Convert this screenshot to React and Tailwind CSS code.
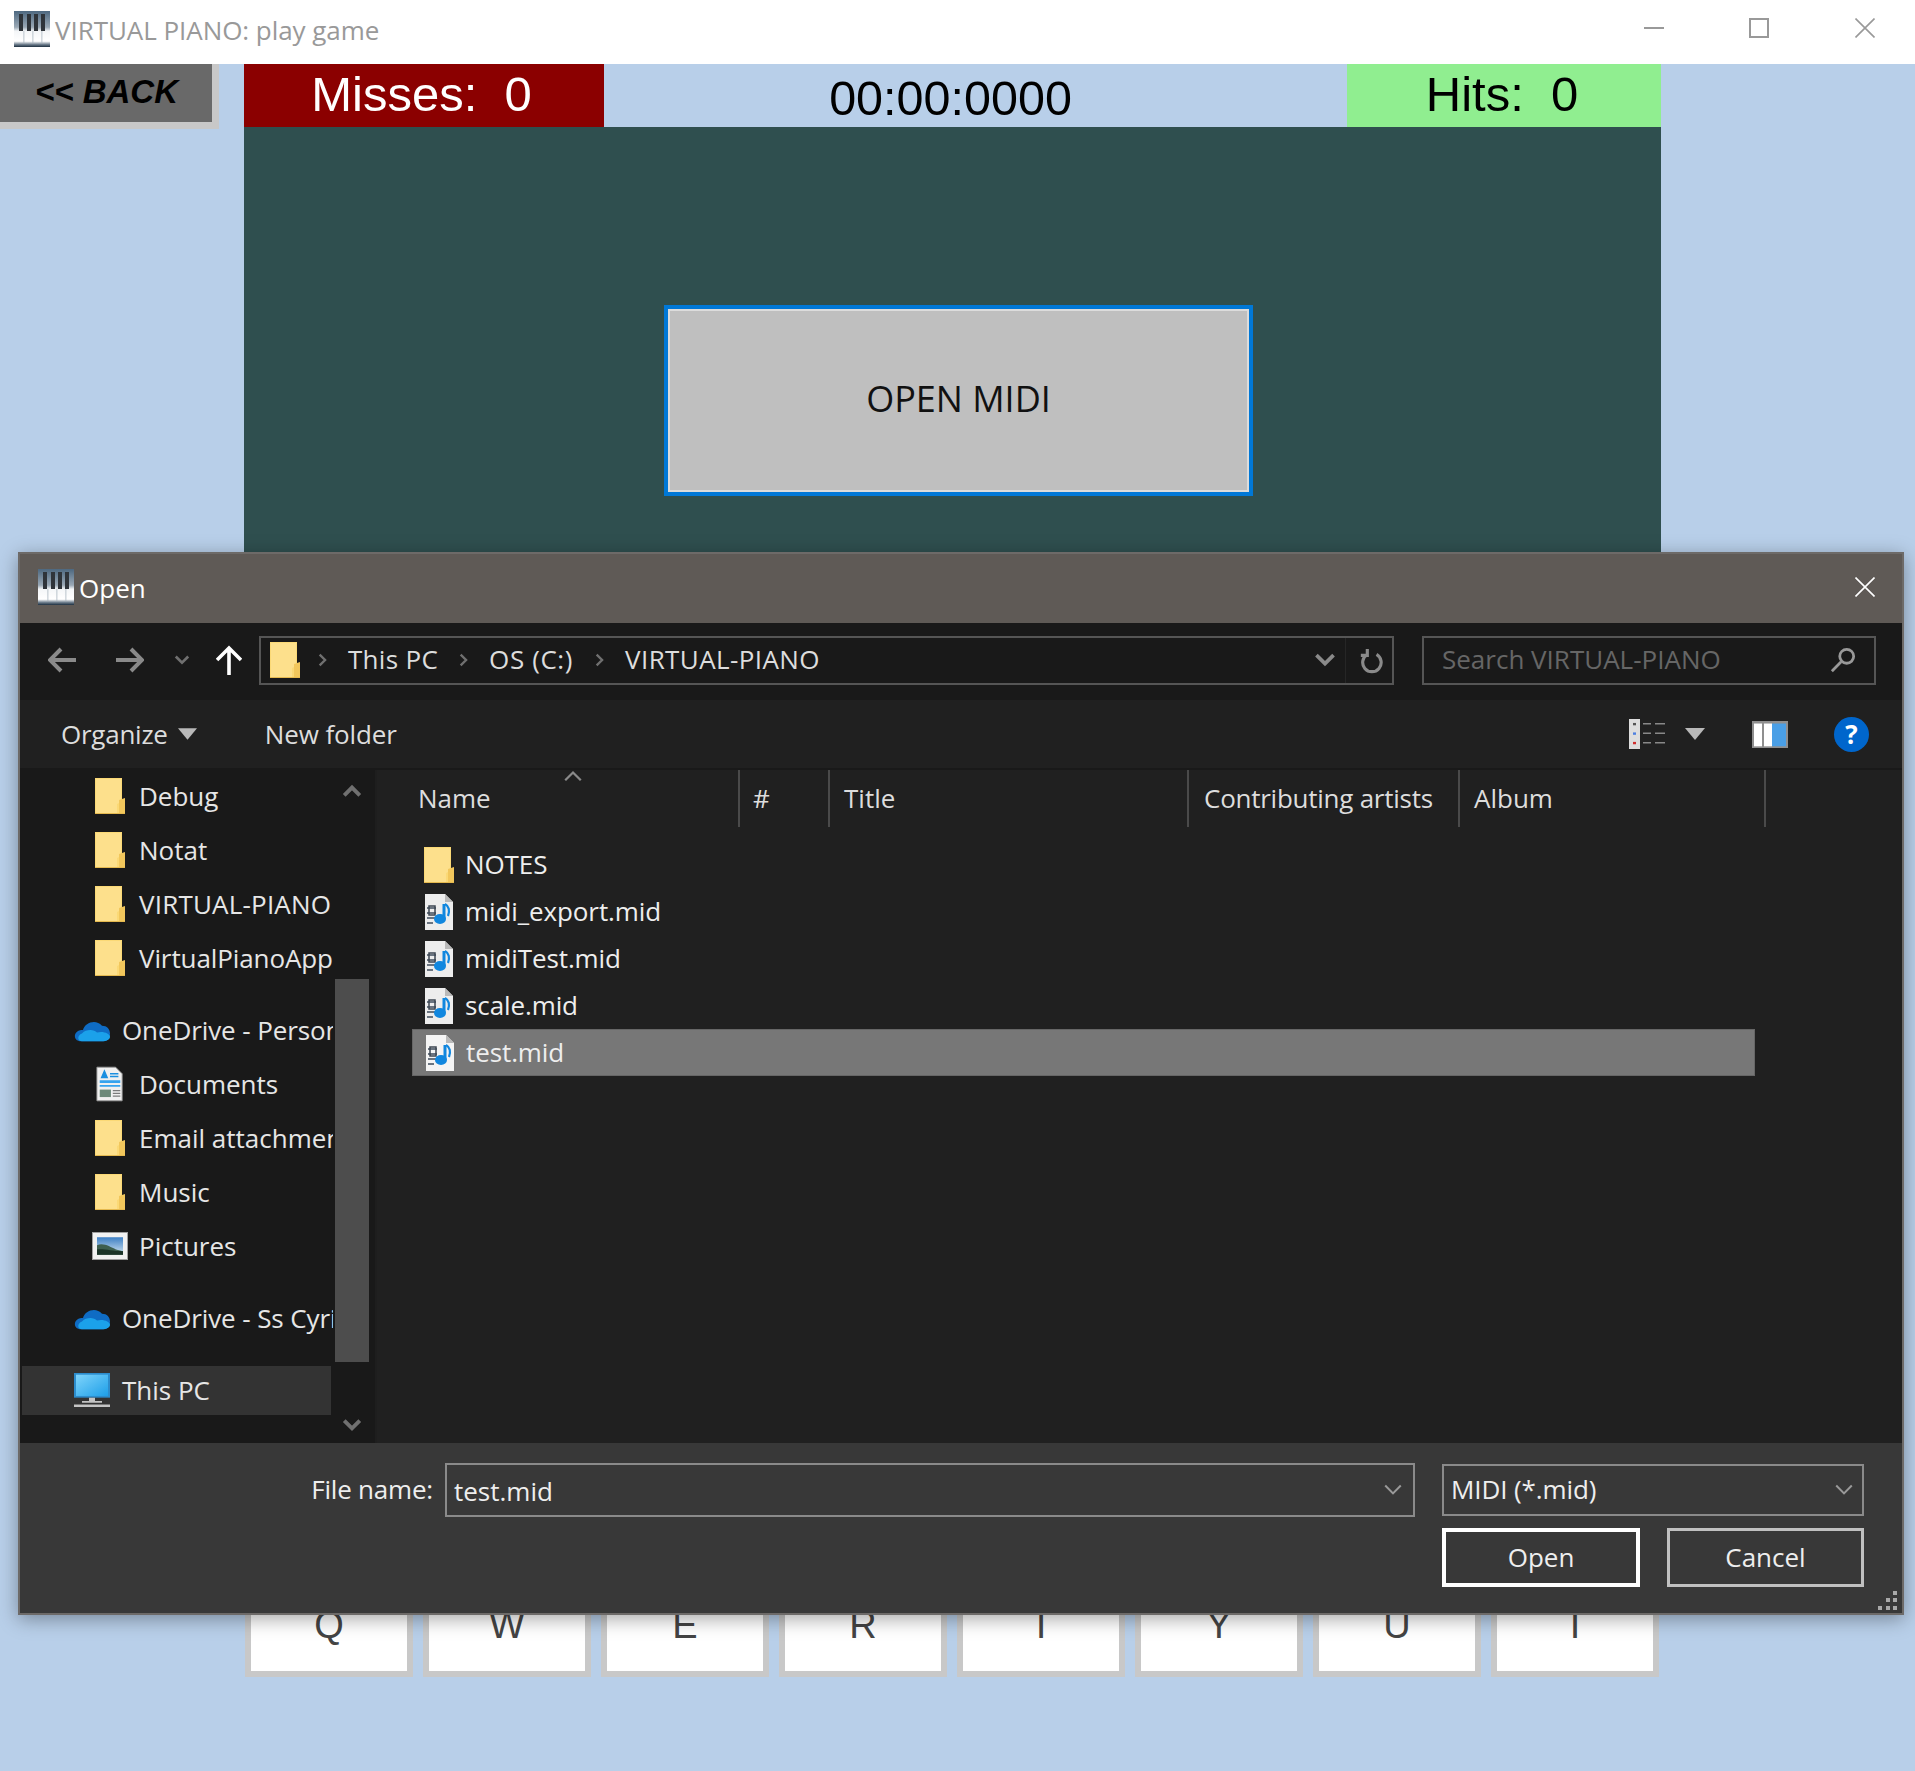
import React from "react";

const UI = { fontFamily: '"Open Sans", "Noto Sans", sans-serif' };
const ARIAL = { fontFamily: '"Liberation Sans", Arial, sans-serif' };

function Piano({ className }) {
  return (
    <svg viewBox="0 0 36 36" className={className}>
      <defs>
        <linearGradient id="pianoBg" x1="0" y1="0" x2="0" y2="1">
          <stop offset="0" stopColor="#4d6880" />
          <stop offset="0.45" stopColor="#9aa8b5" />
          <stop offset="0.56" stopColor="#f4f6f8" />
          <stop offset="0.84" stopColor="#ffffff" />
          <stop offset="0.93" stopColor="#6d7d8c" />
          <stop offset="1" stopColor="#1d2f40" />
        </linearGradient>
      </defs>
      <rect width="36" height="36" fill="url(#pianoBg)" />
      {[5, 13, 20, 27].map((x) => (
        <rect key={x} x={x} y="3" width="4" height="17" fill="#2f343a" />
      ))}
      {[9, 18, 27].map((x) => (
        <rect key={x} x={x + 0.5} y="20" width="0.8" height="12" fill="#aab5bf" />
      ))}
    </svg>
  );
}

function Folder({ className = "w-[30px] h-[36px] shrink-0" }) {
  return (
    <svg viewBox="0 0 30 36" className={className}>
      <path d="M0 0H27V36H0Z" fill="#fbd976" />
      <path d="M1 1H26V24L22 26V35H1Z" fill="#fde08c" />
      <path d="M24 22L30 20V36H24Z" fill="#f2c75c" />
      <path d="M0 35H30V36H0Z" fill="#e5b94f" />
    </svg>
  );
}

function MidiIcon({ selected }) {
  return (
    <svg viewBox="0 0 30 36" className="w-[30px] h-[36px] shrink-0">
      <path d="M1 0H21L29 8V36H1Z" fill={selected ? "#f4f4f4" : "#ededed"} />
      <path d="M21 0V8H29Z" fill="#b9b9b9" />
      <path d="M3 14H12M3 19H12M3 24H11M3 29H9" stroke="#6a7480" strokeWidth="1.8" />
      <rect x="5" y="12" width="6" height="9" fill="none" stroke="#3c4652" strokeWidth="1.5" />
      <path d="M20 10V25" stroke="#1187df" strokeWidth="3" />
      <path d="M21 10C25 12 26 17 24 22" stroke="#1187df" strokeWidth="2.2" fill="none" />
      <ellipse cx="16" cy="25" rx="6" ry="5" fill="#1187df" />
    </svg>
  );
}

function Cloud() {
  return (
    <svg viewBox="0 0 36 28" preserveAspectRatio="none" className="w-[36px] h-[24px] shrink-0">
      <path d="M6 27C1 27-1 20 3 16C5 14 7 14 9 14C11 5 22 1 28 9C33 9 36 13 36 18C36 24 33 27 29 27Z" fill="#0f6cc4" />
      <path d="M8 27C3 27 3 20 8 18C12 13 20 13 23 17C29 15 36 18 36 22C36 25 33 27 30 27Z" fill="#1ba1ea" />
    </svg>
  );
}

function Docs() {
  return (
    <svg viewBox="0 0 30 36" className="w-[28px] h-[36px] shrink-0">
      <path d="M1 0H21L28 7V36H1Z" fill="#f0f0f0" stroke="#9a9a9a" />
      <path d="M9 4L6 11H12ZM15 7H24M15 10H24" stroke="#1b8fe0" strokeWidth="1.5" fill="#1b8fe0" />
      <path d="M4 14H26V17H4Z M4 19H26V21H4Z" fill="#36a3ee" />
      <path d="M4 24H16V32H4Z" fill="#6d8a7a" />
      <path d="M18 25H26M18 28H26M18 31H26" stroke="#7a7a7a" strokeWidth="1.4" />
    </svg>
  );
}

function PicturesIcon() {
  return (
    <svg viewBox="0 0 36 32" preserveAspectRatio="none" className="w-[36px] h-[28px] shrink-0">
      <rect x="0.5" y="0.5" width="35" height="31" fill="#f1f1f1" stroke="#a0a0a0" />
      <defs>
        <linearGradient id="sky" x1="0" y1="0" x2="0" y2="1">
          <stop offset="0" stopColor="#3d7fc4" />
          <stop offset="1" stopColor="#d4e6f2" />
        </linearGradient>
      </defs>
      <rect x="5" y="6" width="26" height="20" fill="url(#sky)" />
      <path d="M5 15C12 12 18 17 24 20L31 22V26H5Z" fill="#3e5f4f" />
      <path d="M5 20C12 19 20 22 31 22V26H5Z" fill="#1b3327" />
    </svg>
  );
}

function Monitor() {
  return (
    <svg viewBox="0 0 36 40" preserveAspectRatio="none" className="w-[36px] h-[34px] shrink-0">
      <defs>
        <linearGradient id="scr" x1="0" y1="0" x2="1" y2="1">
          <stop offset="0" stopColor="#7fd4fb" />
          <stop offset="1" stopColor="#1e9fe8" />
        </linearGradient>
      </defs>
      <rect x="0" y="0" width="36" height="29" fill="#2c8ccc" />
      <rect x="2" y="2" width="32" height="25" fill="url(#scr)" />
      <path d="M15 29H21V33H28V35H8V33H15Z" fill="#c4c4c4" />
      <path d="M0 37H36V40H0Z" fill="#c4c4c4" />
    </svg>
  );
}

function Chevron({ dir = "down", className, color = "#8c8c8c", w = 2.5 }) {
  const paths = {
    down: "M2 5L9 12L16 5",
    up: "M2 12L9 5L16 12",
    right: "M6 2L13 9L6 16",
  };
  return (
    <svg viewBox="0 0 18 18" className={className} fill="none" stroke={color} strokeWidth={w}>
      <path d={paths[dir]} />
    </svg>
  );
}

function Arrow({ flip, color, className }) {
  return (
    <svg viewBox="0 0 30 30" className={className} style={flip ? { transform: "scaleX(-1)" } : undefined} fill="none" stroke={color} strokeWidth="4">
      <path d="M2 15H28M17 4L28 15L17 26" />
    </svg>
  );
}

function Tri({ className }) {
  return (
    <svg viewBox="0 0 20 12" className={className}>
      <path d="M0 0H20L10 12Z" fill="#b9b9b9" />
    </svg>
  );
}

function TitleX({ color, className }) {
  return (
    <svg viewBox="0 0 20 20" className={className} fill="none" stroke={color} strokeWidth="1.6">
      <path d="M0.5 0.5L19.5 19.5M19.5 0.5L0.5 19.5" />
    </svg>
  );
}

function TitleBar() {
  return (
    <div className="flex h-[64px] items-center bg-white pl-[14px] text-[#999999]">
      <Piano className="-mt-[6px] w-[36px] h-[36px] shrink-0" />
      <span className="ml-[5px] -mt-[4px] text-[26px] tracking-[-0.05px]" style={UI}>VIRTUAL PIANO: play game</span>
      <div className="ml-auto flex -mt-[8px] items-center pr-[40px]">
        <div className="h-[2px] w-[20px] bg-[#999999]" />
        <div className="ml-[85px] h-[20px] w-[20px] border-2 border-[#999999]" />
        <TitleX color="#999999" className="ml-[86px] h-[20px] w-[20px]" />
      </div>
    </div>
  );
}

const KEYS = ["Q", "W", "E", "R", "T", "Y", "U", "I"];

function Game() {
  return (
    <div className="flex">
      <div className="w-[244px] shrink-0">
        <div className="flex h-[65px] w-[219px] items-center border-b-[7px] border-r-[7px] border-[#c8c8c8] bg-[#696969] pb-[2px] pl-[35px] text-[33px] font-bold italic text-black" style={ARIAL}>
          {"<< BACK"}
        </div>
      </div>
      <div className="w-[1417px] shrink-0">
        <div className="flex h-[63px]" style={ARIAL}>
          <div className="flex w-[360px] items-center justify-center bg-[#8b0000] pb-[2px] pr-[5px] text-[49px] whitespace-pre text-white">Misses:  0</div>
          <div className="flex w-[743px] items-center justify-center pr-[50px] pt-[6px] text-[48.5px] text-black">00:00:0000</div>
          <div className="flex w-[314px] items-center justify-center bg-[#90ee90] pb-[2px] pr-[4px] text-[49px] whitespace-pre text-black">Hits:  0</div>
        </div>
        <div className="h-[900px] bg-[#2f4f4f] pl-[420px] pt-[178px]">
          <div className="flex h-[191px] w-[589px] items-center justify-center border-[4px] border-[#0078d7] bg-[#bfbfbf] pb-[3px] text-[36px] text-[#111] outline-2 -outline-offset-[6px] outline-[#dcdcdc]" style={UI}>
            OPEN MIDI
          </div>
        </div>
        <div className="mt-[546px] flex gap-[10px] pl-[1px]">
          {KEYS.map((k) => (
            <div key={k} className="flex h-[104px] w-[168px] shrink-0 items-center justify-center border-[6px] border-[#c8c8c8] bg-white text-[38px] text-[#444444]" style={ARIAL}>
              {k}
            </div>
          ))}
        </div>
      </div>
    </div>
  );
}

function SideRow({ icon, label, indent = true, selected, className = "", labelClass = "" }) {
  return (
    <div className={`flex h-[54px] items-center ${className}`}>
      <div className={`ml-[2px] flex h-[49px] items-center overflow-hidden whitespace-nowrap ${selected ? "w-[309px] bg-[#333333]" : "w-[311px]"} ${indent ? "pl-[72px]" : "pl-[52px]"}`}>
        <div className={`flex shrink-0 justify-center ${indent ? "w-[32px]" : "w-[36px]"}`}>{icon}</div>
        <span className={`${indent ? "ml-[13px]" : "ml-[12px]"} text-[#e6e6e6] ${labelClass}`}>{label}</span>
      </div>
    </div>
  );
}

function Sidebar() {
  return (
    <div className="relative flex w-[355px] shrink-0 bg-[#191919] text-[26px]" style={UI}>
      <div className="-mt-[1px] w-[315px] shrink-0">
        <SideRow icon={<Folder />} label="Debug" />
        <SideRow icon={<Folder />} label="Notat" />
        <SideRow icon={<Folder />} label="VIRTUAL-PIANO" labelClass="tracking-[0.2px]" />
        <SideRow icon={<Folder />} label="VirtualPianoApp" labelClass="tracking-[-0.1px]" />
        <SideRow className="mt-[18px]" icon={<Cloud />} label="OneDrive - Personal" indent={false} labelClass="tracking-[-0.1px]" />
        <SideRow icon={<Docs />} label="Documents" />
        <SideRow icon={<Folder />} label="Email attachments" />
        <SideRow icon={<Folder />} label="Music" />
        <SideRow icon={<PicturesIcon />} label="Pictures" />
        <SideRow className="mt-[18px]" icon={<Cloud />} label="OneDrive - Ss Cyril" indent={false} labelClass="tracking-[-0.1px]" />
        <SideRow className="mt-[18px]" icon={<Monitor />} label="This PC" indent={false} selected />
      </div>
      <div className="flex w-[34px] shrink-0 flex-col items-center">
        <Chevron dir="up" className="mt-[12px] h-[20px] w-[20px]" color="#707070" w={3.5} />
        <div className="mt-[177px] h-[383px] w-[34px] bg-[#4d4d4d]" />
        <Chevron dir="down" className="mt-[53px] h-[20px] w-[20px]" color="#707070" w={3.5} />
      </div>
    </div>
  );
}

function Column({ label, className }) {
  return (
    <div className={`flex h-[57px] shrink-0 items-center border-r-2 border-[#4a4a4a] text-[#dddddd] ${className}`}>{label}</div>
  );
}

function FileRow({ name, icon, selected }) {
  return (
    <div className={`flex h-[47px] w-[1343px] items-center pl-[12px] ${selected ? "border border-[#666666] bg-[#777777]" : ""}`}>
      {icon}
      <span className="ml-[11px] tracking-[-0.1px] text-[#eeeeee]">{name}</span>
    </div>
  );
}

function Files() {
  return (
    <div className="flex-1 border-l-2 border-[#1e1e1e] bg-[#202020] text-[26px]" style={UI}>
      <div className="relative flex">
        <Column label="Name" className="w-[363px] pl-[41px]" />
        <Column label="#" className="w-[90px] pl-[13px]" />
        <Column label="Title" className="w-[359px] pl-[14px]" />
        <Column label={<span className="tracking-[-0.25px]">Contributing artists</span>} className="w-[271px] pl-[15px]" />
        <Column label="Album" className="w-[306px] pl-[14px]" />
        <Chevron dir="up" className="absolute left-[185px] top-[-3px] h-[20px] w-[22px]" color="#8a8a8a" w={2} />
      </div>
      <div className="ml-[35px] mt-[14px]">
        <FileRow name="NOTES" icon={<Folder />} />
        <FileRow name="midi_export.mid" icon={<MidiIcon />} />
        <FileRow name="midiTest.mid" icon={<MidiIcon />} />
        <FileRow name="scale.mid" icon={<MidiIcon />} />
        <FileRow name="test.mid" icon={<MidiIcon selected />} selected />
      </div>
    </div>
  );
}

function Dialog() {
  return (
    <div className="absolute left-[18px] top-[552px] flex w-[1886px] flex-col border-2 border-[#6d6a68] bg-[#191919] shadow-[0_4px_18px_rgba(0,0,0,0.35)]" style={UI}>
      <div className="flex h-[69px] items-center bg-[#5f5a56] pl-[18px]">
        <Piano className="-mt-[4px] w-[36px] h-[36px] shrink-0" />
        <span className="ml-[5px] text-[26px] text-white">Open</span>
        <TitleX color="#ffffff" className="ml-auto mr-[27px] -mt-[4px] h-[20px] w-[20px]" />
      </div>
      <div className="flex h-[77px] items-center bg-[#191919] pb-[3px] pl-[28px] text-[26px]">
        <Arrow flip color="#8a8a8a" className="h-[30px] w-[30px]" />
        <Arrow color="#8a8a8a" className="ml-[36px] h-[30px] w-[30px]" />
        <Chevron className="ml-[30px] h-[16px] w-[16px]" color="#707070" w={3} />
        <svg viewBox="0 0 26 30" className="ml-[26px] h-[30px] w-[26px]" fill="none" stroke="#ffffff" strokeWidth="3.6">
          <path d="M13 30V3M1 15L13 3L25 15" />
        </svg>
        <div className="ml-[17px] flex h-[49px] w-[1135px] items-center border-2 border-[#555555] pl-[9px] text-[#dddddd]">
          <Folder />
          <Chevron dir="right" className="ml-[15px] h-[14px] w-[14px]" color="#707070" w={3} />
          <span className="ml-[19px] pb-[2px] tracking-[0.3px]">This PC</span>
          <Chevron dir="right" className="ml-[18px] h-[14px] w-[14px]" color="#707070" w={3} />
          <span className="ml-[19px] pb-[2px] tracking-[0.6px]">OS (C:)</span>
          <Chevron dir="right" className="ml-[19px] h-[14px] w-[14px]" color="#707070" w={3} />
          <span className="ml-[19px] pb-[2px] tracking-[0.4px]">VIRTUAL-PIANO</span>
          <Chevron className="ml-auto h-[22px] w-[22px]" color="#8a8a8a" w={3} />
          <div className="ml-[9px] h-full w-[1px] bg-[#262626]" />
          <svg viewBox="0 0 26 30" className="ml-[13px] mr-[9px] h-[28px] w-[24px]" fill="none" stroke="#8a8a8a" strokeWidth="3.4">
            <path d="M9 7A10 10 0 1 0 19 7M9 1V8H2" transform="translate(0 2)" />
          </svg>
        </div>
        <div className="ml-[28px] flex h-[49px] w-[454px] items-center border-2 border-[#555555] pl-[18px] text-[#666666]">
          <span className="pb-[2px]">Search VIRTUAL-PIANO</span>
          <svg viewBox="0 0 28 28" className="ml-auto mr-[18px] h-[26px] w-[26px]" fill="none" stroke="#999999" strokeWidth="3">
            <circle cx="18" cy="10" r="7.5" />
            <path d="M12 16L2 26" />
          </svg>
        </div>
      </div>
      <div className="flex h-[70px] items-center border-b-2 border-[#191919] bg-[#202020] pl-[41px] text-[26px] text-[#dddddd]">
        <span className="tracking-[-0.25px]">Organize</span>
        <Tri className="ml-[10px] h-[12px] w-[19px]" />
        <span className="ml-[68px] tracking-[-0.1px]">New folder</span>
        <div className="ml-auto flex items-center pr-[33px]">
          <svg viewBox="0 0 38 38" preserveAspectRatio="none" className="h-[30px] w-[38px]">
            <rect x="0" y="0" width="11" height="38" fill="#dddddd" />
            <rect x="4" y="5" width="3" height="3" fill="#555" />
            <rect x="4" y="17" width="3" height="3" fill="#4c7fe0" />
            <rect x="4" y="29" width="3" height="3" fill="#d03030" />
            <path d="M14 6H22M26 6H36M14 18H22M26 18H36M14 30H22M26 30H36" stroke="#888888" strokeWidth="2" />
          </svg>
          <Tri className="ml-[18px] h-[12px] w-[20px]" />
          <svg viewBox="0 0 36 32" preserveAspectRatio="none" className="ml-[47px] h-[27px] w-[36px]">
            <rect width="36" height="32" fill="#8f8f8f" />
            <rect x="2" y="3" width="8" height="27" fill="#ffffff" />
            <rect x="12" y="3" width="8" height="27" fill="#ffffff" />
            <rect x="20" y="3" width="14" height="27" fill="#4a9fe6" />
          </svg>
          <div className="ml-[46px] flex h-[35px] w-[35px] items-center justify-center rounded-[50%] bg-[#0066cc] text-[26px] font-bold text-white">?</div>
        </div>
      </div>
      <div className="flex h-[673px]">
        <Sidebar />
        <Files />
      </div>
      <div className="relative h-[170px] bg-[#383838] pt-[20px] text-[26px] text-[#eeeeee]">
        <div className="flex items-center">
          <span className="w-[413px] pb-[2px] text-right tracking-[-0.2px]">File name:</span>
          <div className="ml-[12px] flex h-[54px] w-[970px] items-center border-2 border-[#8a8a8a] pl-[7px]">
            <span className="pt-[2px]">test.mid</span>
            <Chevron className="ml-auto mr-[10px] h-[20px] w-[20px]" color="#9a9a9a" w={1.8} />
          </div>
          <div className="ml-[27px] flex h-[52px] w-[422px] items-center border-2 border-[#8a8a8a] pl-[7px]">
            <span className="pb-[1px] tracking-[-0.1px]">MIDI (*.mid)</span>
            <Chevron className="ml-auto mr-[8px] h-[20px] w-[20px]" color="#9a9a9a" w={1.8} />
          </div>
        </div>
        <div className="mt-[11px] flex gap-[27px] pl-[1422px]">
          <div className="flex h-[59px] w-[198px] items-center justify-center border-[4px] border-white">Open</div>
          <div className="flex h-[59px] w-[197px] items-center justify-center border-[3px] border-[#c0c0c0]">Cancel</div>
        </div>
        <svg viewBox="0 0 20 20" className="absolute bottom-[2px] right-[4px] h-[20px] w-[20px]" fill="#a8a8a8">
          {[[15, 0], [8, 7], [15, 7], [0, 15], [8, 15], [15, 15]].map(([x, y]) => (
            <rect key={`${x}-${y}`} x={x} y={y} width="4" height="4" />
          ))}
        </svg>
      </div>
    </div>
  );
}

export default function App() {
  return (
    <div className="relative h-[1771px] overflow-hidden bg-[#b8cfe9]">
      <TitleBar />
      <Game />
      <Dialog />
    </div>
  );
}
